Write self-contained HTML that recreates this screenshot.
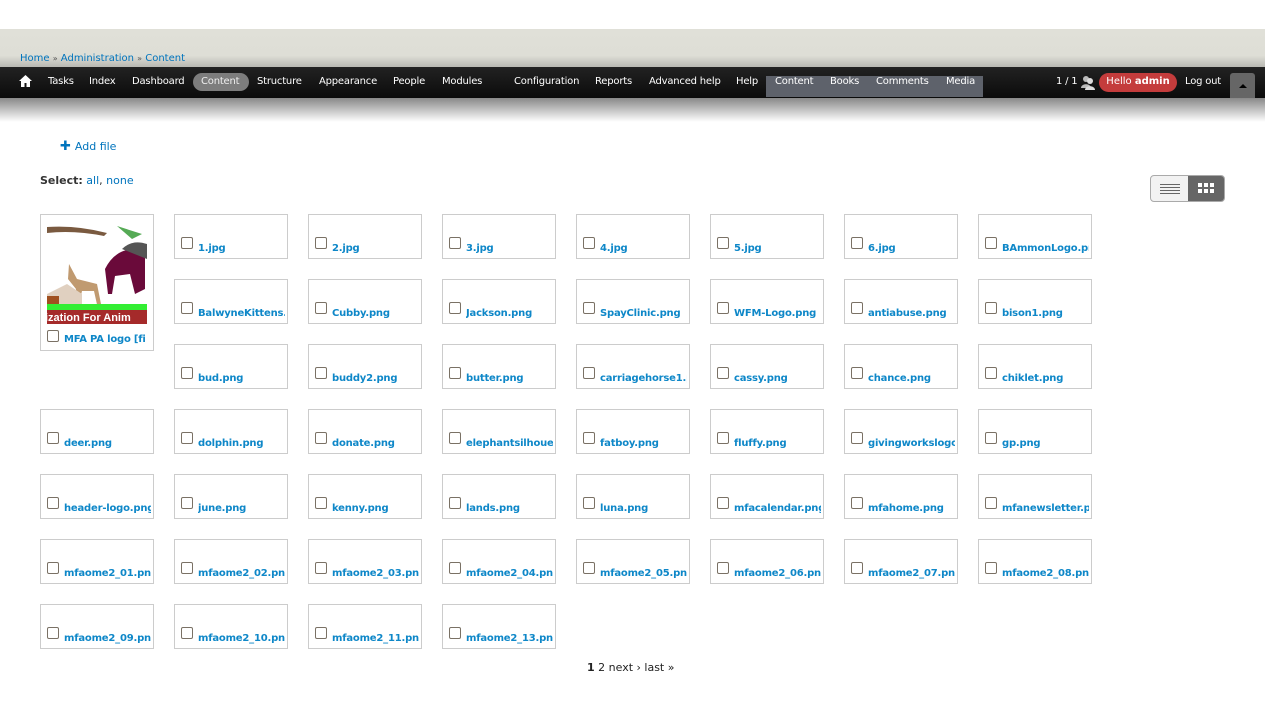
<!DOCTYPE html>
<html><head><meta charset="utf-8"><style>
*{margin:0;padding:0;box-sizing:border-box}
body{width:1265px;height:716px;background:#fff;font-family:"DejaVu Sans","Liberation Sans",sans-serif;position:relative;overflow:hidden}
.top{position:absolute;left:0;top:29px;width:1265px;height:38px;background:linear-gradient(#e0e0d8 0,#deded6 70%,#b8b8b2 100%)}
.bc{position:absolute;left:20px;top:53px;font-size:10px;color:#0074bd}
.bc span{color:#555;font-size:8px}
.nav{position:absolute;left:0;top:67px;width:1265px;height:31px;background:linear-gradient(#222,#0b0b0b)}
.shade{position:absolute;left:0;top:98px;width:1265px;height:24px;background:linear-gradient(#888,#fff)}
.nav a{position:absolute;top:9px;color:#fff;font-size:10px;text-decoration:none;white-space:nowrap;letter-spacing:-0.2px}
.pill{position:absolute;left:193px;top:73px;width:56px;height:18px;border-radius:9px;background:#7d7d7d}
.sc{position:absolute;left:766px;top:76px;width:217px;height:21px;background:#5e626b}
.hello{position:absolute;left:1099px;top:73px;width:78px;height:19px;border-radius:10px;background:#c43c3c;color:#fff;font-size:10px;text-align:center;line-height:18px}
.tog{position:absolute;left:1230px;top:73px;width:25px;height:25px;background:#666;border-radius:3px 3px 0 0}
.tog:after{content:"";position:absolute;left:9px;top:11px;border:4px solid transparent;border-bottom:4px solid #000;border-top:0}
.t{position:absolute;width:114px;height:45px;border:1px solid #ccc;overflow:hidden}
.t i{position:absolute;left:6px;top:22px;width:12px;height:12px;border:1px solid #7a7165;border-radius:2px;background:#fff}
.t b{position:absolute;left:23px;top:28px;font-size:10px;color:#0e87c8;white-space:nowrap;width:87px;overflow:hidden;letter-spacing:-0.2px}
.lnk{color:#0074bd}
</style></head><body>
<div class="top"></div>
<div class="bc">Home <span>»</span> Administration <span>»</span> Content</div>
<div class="nav"></div>
<div class="shade"></div>
<div class="pill"></div>
<div class="sc"></div>
<svg style="position:absolute;left:19px;top:75px" width="13" height="12" viewBox="0 0 13 12"><path d="M6.5 0L0 6h2v6h3.5V8h2v4H11V6h2z" fill="#fff"/></svg>
<div class="nav" style="background:none">
<a style="left:48px">Tasks</a><a style="left:89px">Index</a><a style="left:132px">Dashboard</a><a style="left:201px;color:#eee">Content</a><a style="left:257px">Structure</a><a style="left:319px">Appearance</a><a style="left:393px">People</a><a style="left:442px">Modules</a><a style="left:514px">Configuration</a><a style="left:595px">Reports</a><a style="left:649px">Advanced help</a><a style="left:736px">Help</a><a style="left:775px">Content</a><a style="left:830px">Books</a><a style="left:876px">Comments</a><a style="left:946px">Media</a><a style="left:1056px">1 / 1</a><a style="left:1185px">Log out</a>
</div>
<svg style="position:absolute;left:1080px;top:74px" width="16" height="16" viewBox="0 0 16 16"><circle cx="6" cy="5" r="3" fill="#bbb"/><path d="M1 14c0-5 10-5 10 0z" fill="#bbb"/><circle cx="10" cy="7" r="3" fill="#ddd"/><path d="M5 16c0-5 10-5 10 0z" fill="#ddd"/></svg>
<div class="hello">Hello <b>admin</b></div>
<div class="tog"></div>
<div style="position:absolute;left:60px;top:139px;font-size:11px;color:#0074bd"><span style="font-weight:bold;font-size:13px;margin-right:4px">✚</span>Add file</div>
<div style="position:absolute;left:40px;top:174px;font-size:11px;color:#333"><b>Select:</b> <span class="lnk">all</span>, <span class="lnk">none</span></div>
<div style="position:absolute;left:1150px;top:175px;width:75px;height:27px;border:1px solid #aaa;border-radius:4px;overflow:hidden;background:#f2f2f2">
<div style="position:absolute;left:37px;top:0;width:38px;height:27px;background:#666"></div>
<svg style="position:absolute;left:9px;top:8px" width="20" height="10"><path d="M0 .5h20M0 3.5h20M0 6.5h20M0 9.5h20" stroke="#666"/></svg>
<svg style="position:absolute;left:47px;top:7px" width="17" height="12"><g fill="#fff"><rect x="0" y="0" width="4" height="4"/><rect x="6" y="0" width="4" height="4"/><rect x="12" y="0" width="4" height="4"/><rect x="0" y="6" width="4" height="4"/><rect x="6" y="6" width="4" height="4"/><rect x="12" y="6" width="4" height="4"/></g></svg>
</div>
<div style="position:absolute;left:40px;top:214px;width:114px;height:137px;border:1px solid #ccc;overflow:hidden">
<svg style="position:absolute;left:6px;top:9px" width="100" height="100" viewBox="0 0 100 100">
<rect width="100" height="100" fill="#fff"/>
<path d="M0 3q30 -2 60 6l-3 3q-30-6-57-3z" fill="#7a5a40"/>
<path d="M70 2l25 8-10 5z" fill="#5a5"/>
<path d="M58 45q10-20 30-20l10 5v35l-10 5-5-20-15 2-3 18h-4z" fill="#6a0a3a"/>
<path d="M75 25q10-10 25-5v15z" fill="#555"/>
<path d="M22 40l8 15 20 5 5 25h-4l-4-18-12 0-4 18h-4l2-20-8-10z" fill="#c09a70"/>
<path d="M0 70l20-10 15 10v10h-35z" fill="#e0d0c0"/>
<path d="M0 72h12v8h-12z" fill="#a05020"/>
<rect y="80" width="100" height="6" fill="#3e3"/>
<rect y="86" width="100" height="14" fill="#a52a2a"/>
<text x="-2" y="97" font-size="11" font-weight="bold" fill="#fff" font-family="Liberation Sans">ization For Anim</text>
</svg>
<i style="position:absolute;left:6px;top:115px;width:12px;height:12px;border:1px solid #7a7165;border-radius:2px"></i>
<b style="position:absolute;left:23px;top:119px;font-size:10px;color:#0e87c8;white-space:nowrap;letter-spacing:-0.2px">MFA PA logo [fi</b>
</div>

<div class="t" style="left:174px;top:214px"><i></i><b>1.jpg</b></div>
<div class="t" style="left:308px;top:214px"><i></i><b>2.jpg</b></div>
<div class="t" style="left:442px;top:214px"><i></i><b>3.jpg</b></div>
<div class="t" style="left:576px;top:214px"><i></i><b>4.jpg</b></div>
<div class="t" style="left:710px;top:214px"><i></i><b>5.jpg</b></div>
<div class="t" style="left:844px;top:214px"><i></i><b>6.jpg</b></div>
<div class="t" style="left:978px;top:214px"><i></i><b>BAmmonLogo.png</b></div>

<div class="t" style="left:174px;top:279px"><i></i><b>BalwyneKittens.png</b></div>
<div class="t" style="left:308px;top:279px"><i></i><b>Cubby.png</b></div>
<div class="t" style="left:442px;top:279px"><i></i><b>Jackson.png</b></div>
<div class="t" style="left:576px;top:279px"><i></i><b>SpayClinic.png</b></div>
<div class="t" style="left:710px;top:279px"><i></i><b>WFM-Logo.png</b></div>
<div class="t" style="left:844px;top:279px"><i></i><b>antiabuse.png</b></div>
<div class="t" style="left:978px;top:279px"><i></i><b>bison1.png</b></div>

<div class="t" style="left:174px;top:344px"><i></i><b>bud.png</b></div>
<div class="t" style="left:308px;top:344px"><i></i><b>buddy2.png</b></div>
<div class="t" style="left:442px;top:344px"><i></i><b>butter.png</b></div>
<div class="t" style="left:576px;top:344px"><i></i><b>carriagehorse1.png</b></div>
<div class="t" style="left:710px;top:344px"><i></i><b>cassy.png</b></div>
<div class="t" style="left:844px;top:344px"><i></i><b>chance.png</b></div>
<div class="t" style="left:978px;top:344px"><i></i><b>chiklet.png</b></div>

<div class="t" style="left:40px;top:409px"><i></i><b>deer.png</b></div>
<div class="t" style="left:174px;top:409px"><i></i><b>dolphin.png</b></div>
<div class="t" style="left:308px;top:409px"><i></i><b>donate.png</b></div>
<div class="t" style="left:442px;top:409px"><i></i><b>elephantsilhouette.png</b></div>
<div class="t" style="left:576px;top:409px"><i></i><b>fatboy.png</b></div>
<div class="t" style="left:710px;top:409px"><i></i><b>fluffy.png</b></div>
<div class="t" style="left:844px;top:409px"><i></i><b>givingworkslogo.png</b></div>
<div class="t" style="left:978px;top:409px"><i></i><b>gp.png</b></div>

<div class="t" style="left:40px;top:474px"><i></i><b>header-logo.png</b></div>
<div class="t" style="left:174px;top:474px"><i></i><b>june.png</b></div>
<div class="t" style="left:308px;top:474px"><i></i><b>kenny.png</b></div>
<div class="t" style="left:442px;top:474px"><i></i><b>lands.png</b></div>
<div class="t" style="left:576px;top:474px"><i></i><b>luna.png</b></div>
<div class="t" style="left:710px;top:474px"><i></i><b>mfacalendar.png</b></div>
<div class="t" style="left:844px;top:474px"><i></i><b>mfahome.png</b></div>
<div class="t" style="left:978px;top:474px"><i></i><b>mfanewsletter.png</b></div>

<div class="t" style="left:40px;top:539px"><i></i><b>mfaome2_01.png</b></div>
<div class="t" style="left:174px;top:539px"><i></i><b>mfaome2_02.png</b></div>
<div class="t" style="left:308px;top:539px"><i></i><b>mfaome2_03.png</b></div>
<div class="t" style="left:442px;top:539px"><i></i><b>mfaome2_04.png</b></div>
<div class="t" style="left:576px;top:539px"><i></i><b>mfaome2_05.png</b></div>
<div class="t" style="left:710px;top:539px"><i></i><b>mfaome2_06.png</b></div>
<div class="t" style="left:844px;top:539px"><i></i><b>mfaome2_07.png</b></div>
<div class="t" style="left:978px;top:539px"><i></i><b>mfaome2_08.png</b></div>

<div class="t" style="left:40px;top:604px"><i></i><b>mfaome2_09.png</b></div>
<div class="t" style="left:174px;top:604px"><i></i><b>mfaome2_10.png</b></div>
<div class="t" style="left:308px;top:604px"><i></i><b>mfaome2_11.png</b></div>
<div class="t" style="left:442px;top:604px"><i></i><b>mfaome2_13.png</b></div>

<div style="position:absolute;left:587px;top:661px;font-size:11px;color:#222"><b>1</b> 2 next › last »</div>
</body></html>
